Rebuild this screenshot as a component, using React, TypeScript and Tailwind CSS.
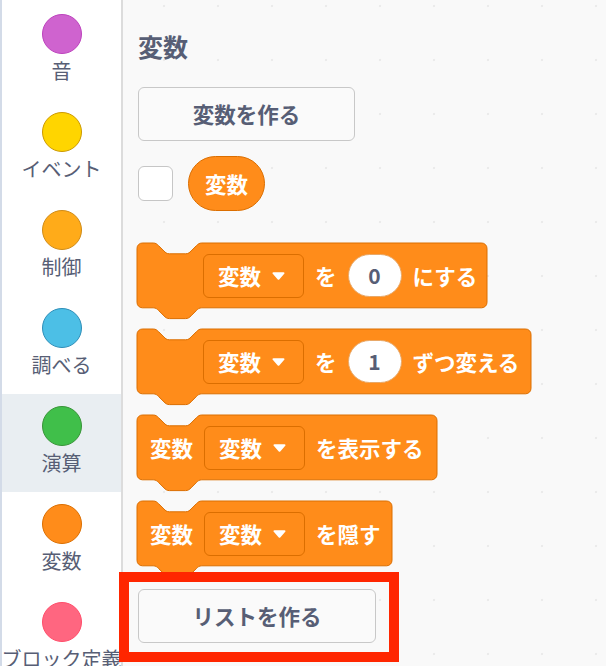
const categories = [
  { label: "音", fill: "bg-[#cf63cf]", ring: "border-[#bd42bd]" },
  { label: "イベント", fill: "bg-[#ffd500]", ring: "border-[#cc9900]" },
  { label: "制御", fill: "bg-[#ffab19]", ring: "border-[#cf8b17]" },
  { label: "調べる", fill: "bg-[#4cbfe6]", ring: "border-[#2e8eb8]" },
  { label: "演算", fill: "bg-[#40bf4a]", ring: "border-[#389438]", active: true },
  { label: "変数", fill: "bg-[#ff8c1a]", ring: "border-[#db6e00]" },
  { label: "ブロック定義", fill: "bg-[#ff6680]", ring: "border-[#ff4d6a]" },
];

const S = 1.35;

function Caret() {
  return (
    <svg width="13" height="8" viewBox="0 0 13 8">
      <path d="M1.5 1.2H11.5L6.5 6.8Z" fill="white" stroke="white" strokeWidth="2" strokeLinejoin="round" />
    </svg>
  );
}

function VarDropdown() {
  return (
    <div className="flex h-[44px] w-[101px] shrink-0 items-center gap-[11px] rounded-[6px] border border-[#db6e00] bg-[#ff8c1a] pl-[14px]">
      <span className="text-[21.5px] font-bold leading-none text-white">変数</span>
      <Caret />
    </div>
  );
}

function NumInput({ value }: { value: string }) {
  return (
    <div className="flex h-[43px] w-[54px] shrink-0 items-center justify-center rounded-full border border-[#e8a868] bg-white">
      <span className="text-[21px] font-bold leading-none text-[#575e75]">{value}</span>
    </div>
  );
}

function Label({ children }: { children: React.ReactNode }) {
  return <span className="whitespace-nowrap text-[21.5px] font-bold leading-none text-white">{children}</span>;
}

function Block({ width, className, children }: { width: number; className: string; children: React.ReactNode }) {
  const w = width / S;
  const d = `M0 4A4 4 0 0 1 4 0H12c2 0 3 1 4 2l4 4c1 1 2 2 4 2h12c2 0 3-1 4-2l4-4c1-1 2-2 4-2H${w - 4}a4 4 0 0 1 4 4v40a4 4 0 0 1-4 4H48c-2 0-3 1-4 2l-4 4c-1 1-2 2-4 2h-12c-2 0-3-1-4-2l-4-4c-1-1-2-2-4-2H4a4 4 0 0 1-4-4z`;
  return (
    <div className={`relative -ml-px flex h-[65px] items-center ${className}`}>
      <svg className="absolute left-0 top-0 overflow-visible" width={width} height={76}>
        <path d={d} transform={`scale(${S})`} fill="#ff8c1a" stroke="#db6e00" strokeWidth="1" vectorEffect="non-scaling-stroke" />
      </svg>
      <div className="relative flex items-center gap-[11px]">{children}</div>
    </div>
  );
}

export default function App() {
  return (
    <div className="relative flex h-[666px] w-[606px] overflow-hidden bg-white font-['Noto_Sans_CJK_JP','Noto_Sans',sans-serif]">
      <div className="w-[2px] shrink-0 bg-[#d3dbe8]" />
      <aside className="flex w-[121px] shrink-0 flex-col border-r-2 border-[#dcdcdc] bg-white pt-[2px]">
        {categories.map((c) => (
          <div
            key={c.label}
            className={`flex h-[98px] shrink-0 flex-col items-center pt-[12px] ${c.active ? "bg-[#e9eef2]" : ""}`}
          >
            <div className={`size-[40px] rounded-full border ${c.fill} ${c.ring}`} />
            <span className="mt-[5px] whitespace-nowrap text-[20px] leading-[24px] text-[#575e75]">{c.label}</span>
          </div>
        ))}
      </aside>

      <main className="flex flex-1 flex-col bg-[#f9f9f9] bg-[radial-gradient(circle,#ebebeb_1px,transparent_1.6px)] bg-[size:54px_54px] bg-[position:14px_-21px] pl-[15px]">
        <h2 className="mt-[31px] h-[30px] text-[25px] font-bold leading-[30px] text-[#575e75]">変数</h2>

        <button className="mt-[26px] flex h-[54px] w-[217px] items-center justify-center rounded-[6px] border border-[#c8c8c8] bg-[#fafafa] text-[21.5px] font-bold text-[#575e75]">
          変数を作る
        </button>

        <div className="mt-[15px] flex h-[55px] items-center gap-[15px]">
          <div className="size-[35px] rounded-[6px] border border-[#c6c6c6] bg-white" />
          <div className="flex h-[55px] w-[77px] items-center justify-center rounded-full border border-[#db6e00] bg-[#ff8c1a]">
            <Label>変数</Label>
          </div>
        </div>

        <div className="mt-[32px] flex flex-col gap-[21px]">
          <Block width={350} className="w-[350px] pl-[66px]">
            <VarDropdown />
            <Label>を</Label>
            <NumInput value="0" />
            <Label>にする</Label>
          </Block>
          <Block width={394} className="w-[394px] pl-[66px]">
            <VarDropdown />
            <Label>を</Label>
            <NumInput value="1" />
            <Label>ずつ変える</Label>
          </Block>
          <Block width={300} className="w-[300px] pl-[13px]">
            <Label>変数</Label>
            <VarDropdown />
            <Label>を表示する</Label>
          </Block>
          <Block width={255} className="w-[255px] pl-[13px]">
            <Label>変数</Label>
            <VarDropdown />
            <Label>を隠す</Label>
          </Block>
        </div>

        <button className="mt-[23px] flex h-[54px] w-[238px] items-center justify-center rounded-[6px] border border-[#c8c8c8] bg-[#fafafa] text-[21.5px] font-bold text-[#575e75]">
          リストを作る
        </button>
      </main>

      <div className="absolute left-[119px] top-[572px] h-[90px] w-[280px] border-[10px] border-[#ff2600]" />
    </div>
  );
}
